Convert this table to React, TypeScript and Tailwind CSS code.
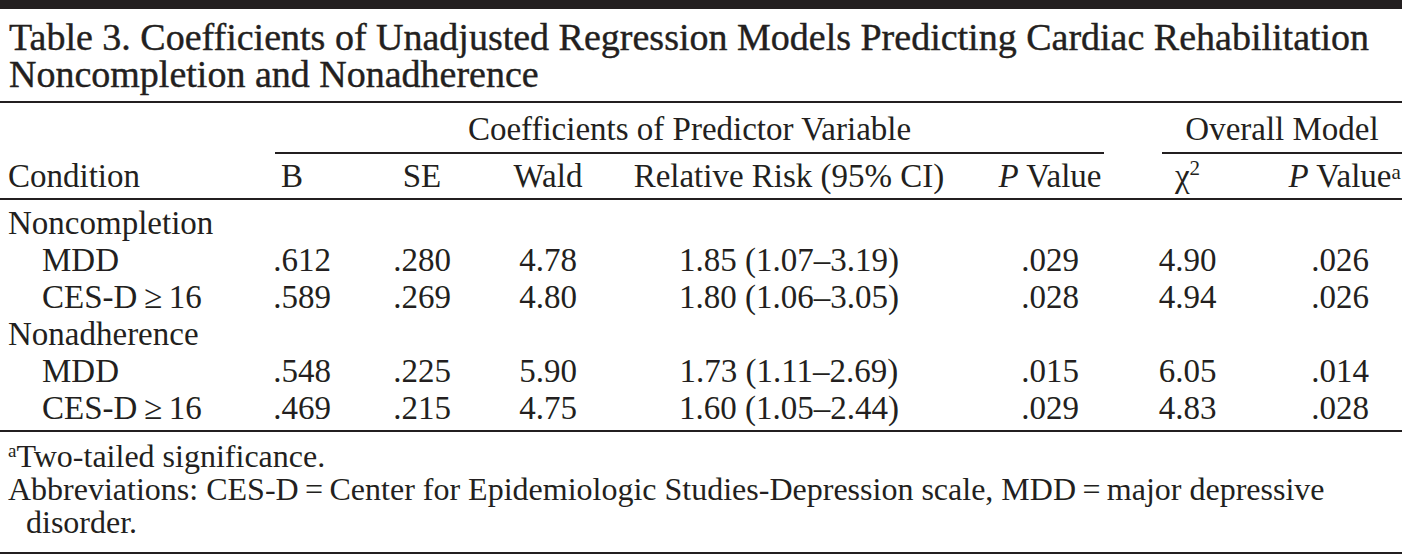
import React from "react";

const serif = "font-['Liberation_Serif',_'Times_New_Roman',_serif]";

type Row = { label: string; indent?: boolean; vals?: string[] };

const rows: Row[] = [
  { label: "Noncompletion" },
  { label: "MDD", indent: true, vals: [".612", ".280", "4.78", "1.85 (1.07–3.19)", ".029", "4.90", ".026"] },
  { label: "CES-D\u2009≥\u200916", indent: true, vals: [".589", ".269", "4.80", "1.80 (1.06–3.05)", ".028", "4.94", ".026"] },
  { label: "Nonadherence" },
  { label: "MDD", indent: true, vals: [".548", ".225", "5.90", "1.73 (1.11–2.69)", ".015", "6.05", ".014"] },
  { label: "CES-D\u2009≥\u200916", indent: true, vals: [".469", ".215", "4.75", "1.60 (1.05–2.44)", ".029", "4.83", ".028"] },
];

const grid = "grid grid-cols-[265px_74px_166px_86px_396px_126px_165px_124px]";

export default function App() {
  return (
    <div className={`w-[1409px] h-[556px] bg-white text-[#231f20] ${serif} overflow-hidden`}>
      <div className="w-[1402px]">
        <div className="h-[9px] bg-[#231f20]" />
        <h1 className="mt-[10px] pl-[9px] text-[38px] leading-[37px] font-normal whitespace-nowrap [-webkit-text-stroke:0.4px_#231f20]">
          <div>Table 3. Coefficients of Unadjusted Regression Models Predicting Cardiac Rehabilitation</div>
          <div>Noncompletion and Nonadherence</div>
        </h1>
        <div className="mt-[8px] border-t-2 border-[#231f20]" />

        <div className="text-[33px] leading-[37px]">
          {/* spanning header */}
          <div className={`${grid} mt-[8px]`}>
            <div />
            <div className="col-span-5 ml-[10px] mr-[9px] border-b-2 border-[#231f20] pb-[4px] text-center">
              Coefficients of Predictor Variable
            </div>
            <div className="col-span-2 ml-[49px] border-b-2 border-[#231f20] pb-[4px] text-center">
              Overall Model
            </div>
          </div>
          {/* column header */}
          <div className={`${grid} mt-[4px] pb-[3px] border-b-2 border-[#231f20] whitespace-nowrap`}>
            <div className="pl-[8px]">Condition</div>
            <div className="text-center pr-[20px]">B</div>
            <div className="text-center">SE</div>
            <div className="text-center">Wald</div>
            <div className="text-center">Relative Risk (95% CI)</div>
            <div className="text-center">
              <i>P</i> Value
            </div>
            <div className="text-center pr-[16px]">
              χ<sup className="text-[21px] leading-none relative -top-[12px]">2</sup>
            </div>
            <div className="text-center">
              <span className="relative">
                <i>P</i> Value
                <sup className="absolute left-full top-[4px] text-[21px] leading-none">a</sup>
              </span>
            </div>
          </div>
          {/* body */}
          <div className="pt-[5px] pb-[3px] border-b-2 border-[#231f20] whitespace-nowrap">
            {rows.map((r, i) => (
              <div key={i} className={grid}>
                <div className={r.indent ? "pl-[42px]" : "pl-[8px]"}>{r.label}</div>
                {r.vals
                  ? r.vals.map((v, j) => (
                      <div key={j} className={j === 5 ? "text-center pr-[16px]" : "text-center"}>
                        {v}
                      </div>
                    ))
                  : null}
              </div>
            ))}
          </div>
          {/* footnotes */}
          <div className="pt-[8px] pb-[13px] pl-[8px] text-[32px] leading-[33px] border-b-2 border-[#231f20]">
            <p>
              <sup className="text-[19px] leading-none relative -top-[10px]">a</sup>Two-tailed significance.
            </p>
            <p className="pl-[18px] -indent-[18px]">
              Abbreviations: CES-D{"\u2009"}={"\u2009"}Center for Epidemiologic Studies-Depression scale, MDD{"\u2009"}={"\u2009"}major depressive disorder.
            </p>
          </div>
        </div>
      </div>
    </div>
  );
}
